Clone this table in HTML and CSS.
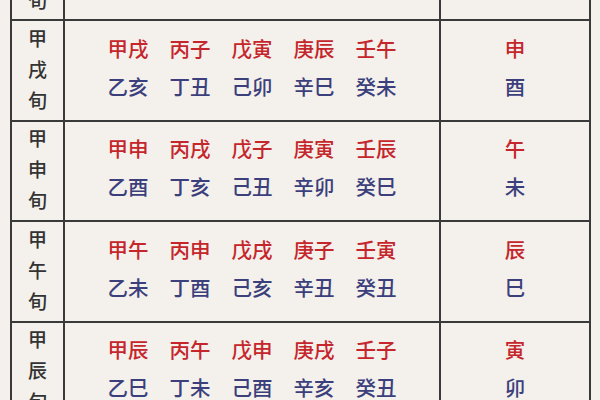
FILE: index.html
```html
<!DOCTYPE html>
<html lang="zh">
<head>
<meta charset="utf-8">
<title>六甲旬空</title>
<link rel="stylesheet" href="styles.css">
</head>
<body>
<table class="xun">
  <tr>
    <td class="name"><span>甲</span><span>子</span><span>旬</span></td>
    <td class="pairs">
      <div class="line red"><span>甲子</span><span>丙寅</span><span>戊辰</span><span>庚午</span><span>壬申</span></div>
      <div class="line blue"><span>乙丑</span><span>丁卯</span><span>己巳</span><span>辛未</span><span>癸酉</span></div>
    </td>
    <td class="empty"><div class="red">戌</div><div class="blue">亥</div></td>
  </tr>
  <tr>
    <td class="name"><span>甲</span><span>戌</span><span>旬</span></td>
    <td class="pairs">
      <div class="line red"><span>甲戌</span><span>丙子</span><span>戊寅</span><span>庚辰</span><span>壬午</span></div>
      <div class="line blue"><span>乙亥</span><span>丁丑</span><span>己卯</span><span>辛巳</span><span>癸未</span></div>
    </td>
    <td class="empty"><div class="red">申</div><div class="blue">酉</div></td>
  </tr>
  <tr>
    <td class="name"><span>甲</span><span>申</span><span>旬</span></td>
    <td class="pairs">
      <div class="line red"><span>甲申</span><span>丙戌</span><span>戊子</span><span>庚寅</span><span>壬辰</span></div>
      <div class="line blue"><span>乙酉</span><span>丁亥</span><span>己丑</span><span>辛卯</span><span>癸巳</span></div>
    </td>
    <td class="empty"><div class="red">午</div><div class="blue">未</div></td>
  </tr>
  <tr>
    <td class="name"><span>甲</span><span>午</span><span>旬</span></td>
    <td class="pairs">
      <div class="line red"><span>甲午</span><span>丙申</span><span>戊戌</span><span>庚子</span><span>壬寅</span></div>
      <div class="line blue"><span>乙未</span><span>丁酉</span><span>己亥</span><span>辛丑</span><span>癸丑</span></div>
    </td>
    <td class="empty"><div class="red">辰</div><div class="blue">巳</div></td>
  </tr>
  <tr>
    <td class="name"><span>甲</span><span>辰</span><span>旬</span></td>
    <td class="pairs">
      <div class="line red"><span>甲辰</span><span>丙午</span><span>戊申</span><span>庚戌</span><span>壬子</span></div>
      <div class="line blue"><span>乙巳</span><span>丁未</span><span>己酉</span><span>辛亥</span><span>癸丑</span></div>
    </td>
    <td class="empty"><div class="red">寅</div><div class="blue">卯</div></td>
  </tr>
</table>
</body>
</html>
```
FILE: styles.css
```css
html, body {
  margin: 0;
  padding: 0;
  background: #f4f0eb;
  overflow: hidden;
}
body {
  font-family: "Noto Sans CJK SC", "Noto Sans", sans-serif;
  font-weight: 500;
}
.xun {
  border-collapse: collapse;
  margin: -81px 0 0 10px;
  width: 581px;
  table-layout: fixed;
}
.xun td {
  border: 2px solid #3a3a3a;
  height: 91.4px;
  padding: 0 0 7px 0;
  text-align: center;
  vertical-align: middle;
}
.xun td.name {
  width: 51px;
  padding-bottom: 4px;
}
.xun td.empty {
  width: 148px;
}
.name span {
  display: block;
  font-size: 19px;
  line-height: 31px;
  color: #333333;
}
.line {
  display: flex;
  justify-content: center;
  gap: 21px;
  font-size: 20.5px;
  line-height: 38px;
}
.empty div {
  font-size: 20.5px;
  line-height: 38px;
}
.red {
  color: #c4262b;
}
.blue {
  color: #3b3f7c;
}
```
